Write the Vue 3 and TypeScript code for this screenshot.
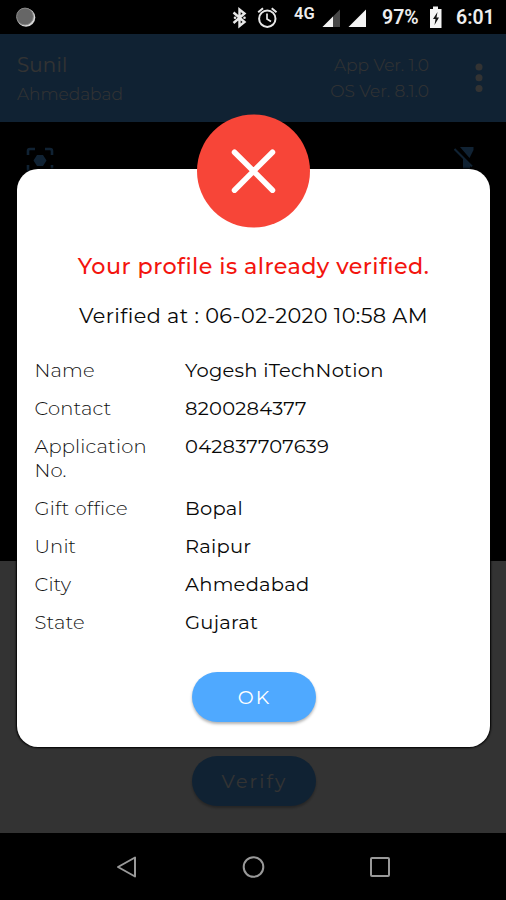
<script setup lang="ts">
interface Detail {
  label: string
  value: string
  key: string
}

const details: Detail[] = [
  { key: 'name', label: 'Name', value: 'Yogesh iTechNotion' },
  { key: 'contact', label: 'Contact', value: '8200284377' },
  { key: 'application', label: 'Application No.', value: '042837707639' },
  { key: 'office', label: 'Gift office', value: 'Bopal' },
  { key: 'unit', label: 'Unit', value: 'Raipur' },
  { key: 'city', label: 'City', value: 'Ahmedabad' },
  { key: 'state', label: 'State', value: 'Gujarat' },
]
</script>

<template>
  <div class="phone">
    <div class="status">
      <svg class="status-icons" width="506" height="34" viewBox="0 0 506 34">
        <circle cx="26" cy="17.500" r="9.300" fill="#d8d8d8" />
        <circle cx="25" cy="16.500" r="8.400" fill="#666" stroke="#888" stroke-width="1" />
        <path d="M233.500 12.500 L244.500 22 L239.500 26 V9.500 L244.500 13.500 L233.500 23" fill="none" stroke="#e8e8e8" stroke-width="2.400" />
        <circle cx="235" cy="17.700" r="1.300" fill="#e8e8e8" />
        <circle cx="244.500" cy="17.700" r="1.300" fill="#e8e8e8" />
        <g fill="none" stroke="#e8e8e8" stroke-width="2">
          <circle cx="267.300" cy="18.700" r="8.200" />
          <path d="M267 13.500 V19 L271 21.500" stroke-width="1.700" />
          <path d="M258.200 12.200 L263 8.300 M276.500 12.200 L271.700 8.300" />
        </g>
        <path d="M340 9.500 V27 H322.500 Z" fill="#484848" />
        <path d="M333 16.500 V27 H322.500 Z" fill="#f4f4f4" />
        <path d="M366 9.500 V27 H348.500 Z" fill="#f4f4f4" />
        <path d="M430 9 H433 V6.500 H438 V9 H441.500 V28 H430 Z" fill="#f4f4f4" />
        <path d="M437.500 12 L433 19 H435.500 L434.500 25 L439 17.500 H436.500 Z" fill="#111" />
      </svg>
      <span class="network">4G</span>
      <span class="battery">97%</span>
      <span class="clock">6:01</span>
    </div>

    <main class="app">
      <header class="header">
        <div class="who">
          <span class="user">Sunil</span>
          <span class="place">Ahmedabad</span>
        </div>
        <div class="versions">
          <span class="app-ver">App Ver. 1.0</span>
          <span class="os-ver">OS Ver. 8.1.0</span>
        </div>
        <svg class="more" width="8" height="30" viewBox="0 0 8 30">
          <circle cx="4" cy="4" r="3.500" />
          <circle cx="4" cy="14.800" r="3.500" />
          <circle cx="4" cy="25.500" r="3.500" />
        </svg>
      </header>
      <section class="camera">
        <svg width="28" height="28" viewBox="0 0 28 28">
          <path d="M2 9 V5 Q2 3 4 3 H9 M19 3 H24 Q26 3 26 5 V9 M2 19 V23 Q2 26 5 26 H9 M19 26 H23 Q26 26 26 23 V19" fill="none" stroke="#4fa9ff" stroke-width="2.600" />
          <path d="M11 9 H17 L20.500 14.500 L17 20 H11 L7.500 14.500 Z" fill="#4fa9ff" />
        </svg>
        <svg width="22" height="28" viewBox="0 0 22 28">
          <path d="M6 1 H19.500 V4 L15.500 12 Z M9 11 L16 18 V26 H9 Z" fill="#4fa9ff" />
          <path d="M0.500 3 L18 20.500" stroke="#4fa9ff" stroke-width="2" />
        </svg>
      </section>
      <section class="panel">
        <button class="pill verify">Verify</button>
      </section>

      <div class="scrim"></div>

      <div class="dialog" role="dialog">
        <svg class="badge" width="114" height="114" viewBox="0 0 114 114">
          <circle cx="56.500" cy="57" r="56.500" fill="#f74538" />
          <path d="M37.500 38.200 L75.500 76.200 M75.500 38.200 L37.500 76.200" stroke="#fff" stroke-width="5.500" stroke-linecap="round" />
        </svg>
        <h1 class="title">Your profile is already verified.</h1>
        <p class="stamp">Verified at : 06-02-2020 10:58 AM</p>
        <dl class="details">
          <div v-for="item in details" :key="item.key" class="row">
            <dt>{{ item.label }}</dt>
            <dd>{{ item.value }}</dd>
          </div>
        </dl>
        <button class="pill ok">OK</button>
      </div>
    </main>

    <nav class="nav">
      <svg width="24" height="24" viewBox="0 0 24 24"><path d="M4 12 L21 2.500 V21.500 Z" /></svg>
      <svg width="24" height="24" viewBox="0 0 24 24"><circle cx="12.500" cy="12" r="9.800" /></svg>
      <svg width="24" height="24" viewBox="0 0 24 24"><rect x="3" y="3" width="18" height="18" rx="1" /></svg>
    </nav>
  </div>
</template>

<style>
body {
  margin: 0;
  background: #000;
}
</style>

<style scoped>
.phone {
  display: flex;
  flex-direction: column;
  width: 506px;
  height: 900px;
  overflow: hidden;
  background: #000;
  font-family: Montserrat, Inter, sans-serif;
}
.status {
  position: relative;
  height: 34px;
  color: #eee;
  font-family: Roboto, sans-serif;
  font-weight: 600;
  line-height: 20px;
}
.status-icons {
  display: block;
}
.status span {
  position: absolute;
  white-space: nowrap;
}
.network {
  left: 294px;
  top: 4px;
  font-size: 16.500px;
}
.battery {
  left: 382px;
  top: 8px;
  font-size: 19.500px;
}
.clock {
  left: 456px;
  top: 8px;
  font-size: 19.500px;
}
.app {
  position: relative;
  display: flex;
  flex-direction: column;
  height: 799px;
}
.header {
  box-sizing: border-box;
  display: flex;
  height: 88px;
  padding: 18px 23px 0 17px;
  background: #4fa9ff;
  color: #fff;
}
.who,
.versions {
  display: flex;
  flex-direction: column;
}
.who {
  flex: 1;
}
.user {
  font-size: 19.800px;
  line-height: 26px;
  letter-spacing: 0.200px;
}
.place {
  margin-top: 4px;
  font-size: 17px;
  font-weight: 300;
  line-height: 24px;
}
.versions {
  align-items: flex-end;
  margin-right: 46px;
  font-size: 17px;
  line-height: 26px;
  font-weight: 300;
}
.more {
  margin-top: 11px;
  fill: #fff;
}
.camera {
  box-sizing: border-box;
  display: flex;
  justify-content: space-between;
  height: 439px;
  padding: 24px 30px 0 26px;
  background: #000;
}
.panel {
  display: flex;
  flex: 1;
  justify-content: center;
  align-items: flex-end;
  padding: 0 0 27px 1px;
  background: #fff;
}
.pill {
  width: 124px;
  height: 50px;
  padding: 0 0 0 2px;
  border: 0;
  border-radius: 25px;
  background: #4fa9ff;
  color: #fff;
  font-family: inherit;
  font-size: 19px;
  box-shadow: 0 2px 3px rgba(0, 0, 0, 0.3);
}
.verify {
  letter-spacing: 2.200px;
}
.scrim {
  position: absolute;
  inset: 0;
  background: rgba(0, 0, 0, 0.8);
}
.dialog {
  position: absolute;
  left: 17px;
  top: 135px;
  box-sizing: border-box;
  display: flex;
  flex-direction: column;
  align-items: center;
  width: 473px;
  height: 578px;
  border-radius: 21px;
  background: #fff;
  color: #080808;
  box-shadow: 0 0 2px 1px #000;
}
.badge {
  flex: none;
  margin-top: -55px;
}
.title {
  margin: 23px 0 0;
  color: #f3140e;
  font-size: 22.300px;
  font-weight: 500;
  line-height: 30px;
  letter-spacing: 0.440px;
  white-space: nowrap;
}
.stamp {
  margin: 20px 0 0;
  font-size: 20.800px;
  line-height: 30px;
  letter-spacing: 0.400px;
  white-space: nowrap;
}
.details {
  display: flex;
  flex-direction: column;
  gap: 14px;
  align-self: stretch;
  margin: 27px 18px 0 17.500px;
  font-size: 19.500px;
  line-height: 24px;
  letter-spacing: 0.250px;
}
.row {
  display: grid;
  grid-template-columns: 150.500px 1fr;
}
.row dt {
  width: 125px;
  color: #111;
  font-weight: 300;
  letter-spacing: 0.150px;
}
.row dd {
  margin: 0;
}
.ok {
  margin-top: 38px;
  letter-spacing: 2px;
}
.nav {
  display: flex;
  flex: 1;
  justify-content: center;
  align-items: center;
  gap: 103px;
}
.nav svg {
  fill: none;
  stroke: #999;
  stroke-width: 2;
  stroke-linejoin: round;
}
</style>
